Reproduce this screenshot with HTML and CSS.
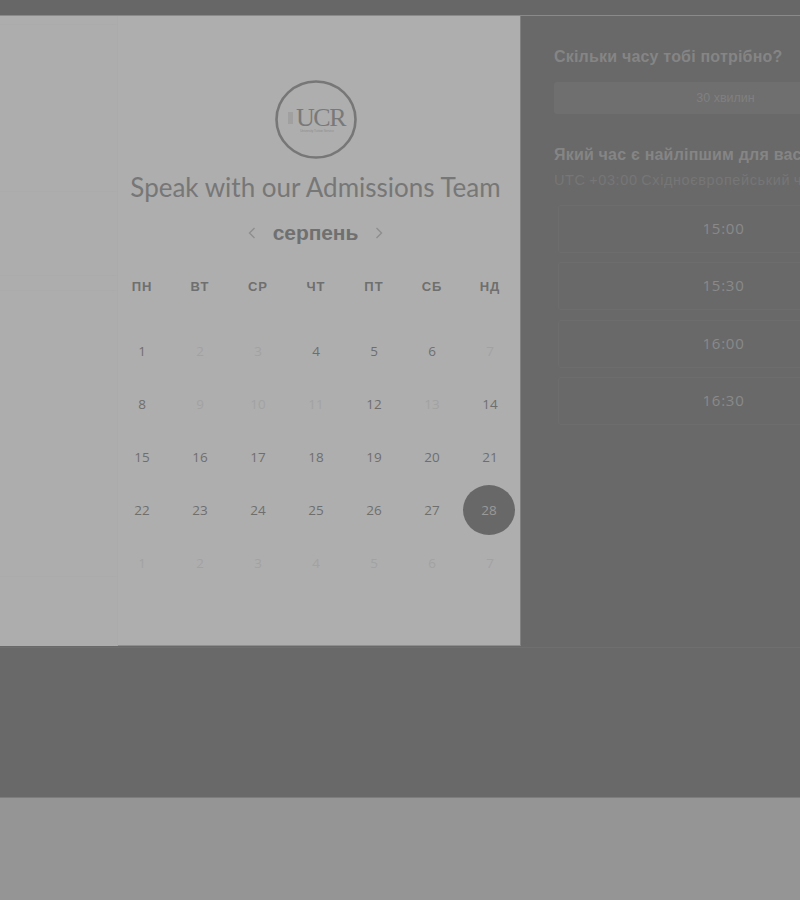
FILE: index.html
```html
<!DOCTYPE html>
<html lang="uk">

<head>
  <meta charset="UTF-8">
  <title>Speak with our Admissions Team</title>
  <link rel="stylesheet" href="styles.css">
</head>

<body>
  <div class="topbar"></div>
  <main class="booking">
    <aside class="side">
      <div class="side-box side-a"></div>
      <div class="side-box side-b"></div>
      <div class="side-box side-c"></div>
      <div class="side-box side-d"></div>
      <div class="side-box side-e"></div>
    </aside>
    <section class="calendar">
      <svg class="logo" width="82" height="79" viewBox="0 0 82 79">
        <ellipse cx="41" cy="39.5" rx="39.5" ry="38" fill="none" stroke="#777777" stroke-width="2.6" />
        <rect x="13" y="32" width="5" height="12" fill="#a0a0a0" />
        <text class="logo-name" x="45.5" y="46" text-anchor="middle">UCR</text>
        <text class="logo-sub" x="42" y="52" text-anchor="middle">University Tuition Service</text>
      </svg>
      <h1>Speak with our Admissions Team</h1>
      <div class="month">
        <svg width="10" height="14" viewBox="0 0 10 14"><path d="M7.5 2 2.5 7l5 5" fill="none" stroke="#8e8e8e" stroke-width="1.4" /></svg>
        <span class="month-name">серпень</span>
        <svg width="10" height="14" viewBox="0 0 10 14"><path d="M2.5 2l5 5-5 5" fill="none" stroke="#8e8e8e" stroke-width="1.4" /></svg>
      </div>
      <div class="weekdays">
        <span>ПН</span><span>ВТ</span><span>СР</span><span>ЧТ</span><span>ПТ</span><span>СБ</span><span>НД</span>
      </div>
      <div class="days">
        <span class="day">1</span><span class="day off">2</span><span class="day off">3</span><span class="day">4</span><span class="day">5</span><span class="day">6</span><span class="day off">7</span>
        <span class="day">8</span><span class="day off">9</span><span class="day off">10</span><span class="day off">11</span><span class="day">12</span><span class="day off">13</span><span class="day">14</span>
        <span class="day">15</span><span class="day">16</span><span class="day">17</span><span class="day">18</span><span class="day">19</span><span class="day">20</span><span class="day">21</span>
        <span class="day">22</span><span class="day">23</span><span class="day">24</span><span class="day">25</span><span class="day">26</span><span class="day">27</span><span class="day selected"><b>28</b></span>
        <span class="day off">1</span><span class="day off">2</span><span class="day off">3</span><span class="day off">4</span><span class="day off">5</span><span class="day off">6</span><span class="day off">7</span>
      </div>
    </section>
    <section class="times">
      <h2>Скільки часу тобі потрібно?</h2>
      <div class="duration">30 хвилин</div>
      <h2 class="best">Який час є найліпшим для вас?</h2>
      <p class="zone">UTC +03:00 Східноєвропейський час</p>
      <div class="slots">
        <div class="slot">15:00</div>
        <div class="slot">15:30</div>
        <div class="slot">16:00</div>
        <div class="slot">16:30</div>
      </div>
    </section>
  </main>
  <div class="band"></div>
  <footer class="footer"></footer>
</body>

</html>
```
FILE: styles.css
```css
html,
body {
  height: 100%;
}

body {
  margin: 0;
  display: flex;
  flex-direction: column;
  overflow: hidden;
  background: #959595;
  font-family: "Liberation Sans", sans-serif;
}

.topbar {
  height: 16px;
  flex: none;
  background: #676767;
  border-bottom: 1px solid #8a8a8a;
  box-sizing: border-box;
}

.booking {
  display: flex;
  align-items: flex-start;
  height: 632px;
  flex: none;
  background: #696969;
  border-bottom: 1px solid #6f6f6f;
  box-sizing: border-box;
}

.side {
  width: 118px;
  height: 630px;
  flex: none;
  display: flex;
  flex-direction: column;
  background: #adadad;
  border-right: 1px solid #ababab;
  box-sizing: border-box;
}

.side-box {
  border-bottom: 1px solid #ababab;
  box-sizing: border-box;
}

.side-a {
  height: 9px;
}

.side-b {
  height: 167px;
}

.side-c {
  height: 84px;
}

.side-d {
  height: 15px;
}

.side-e {
  height: 286px;
}

.calendar {
  width: 403px;
  height: 630px;
  flex: none;
  box-sizing: border-box;
  padding: 64px 7px 0 0;
  display: flex;
  flex-direction: column;
  align-items: center;
  background: #aeaeae;
  border-right: 1px solid #808080;
  border-bottom: 1px solid #8f8f8f;
}

.logo {
  display: block;
}

.logo-name {
  font-family: "Liberation Serif", serif;
  font-size: 26px;
  letter-spacing: -1.5px;
  fill: #797979;
}

.logo-sub {
  font-family: "Liberation Sans", sans-serif;
  font-size: 3px;
  fill: #8c8c8c;
}

h1 {
  margin: 13px 0 0;
  font-family: Lato, sans-serif;
  font-size: 26px;
  line-height: 30px;
  font-weight: 400;
  color: #777777;
  white-space: nowrap;
}

.month {
  display: flex;
  align-items: center;
  gap: 16px;
  margin-top: 16px;
  height: 30px;
}

.month-name {
  font-size: 21px;
  font-weight: 700;
  letter-spacing: -0.1px;
  color: #707070;
}

.weekdays,
.days {
  display: grid;
  grid-template-columns: repeat(7, 58px);
  width: 406px;
  align-self: flex-start;
  margin-left: -5px;
}

.weekdays {
  margin-top: 31px;
  font-size: 13px;
  line-height: 16px;
  font-weight: 700;
  letter-spacing: 1px;
  text-align: center;
  color: #6f6f6f;
}

.days {
  margin-top: 29px;
  grid-auto-rows: 53px;
}

.day {
  display: flex;
  align-items: center;
  justify-content: center;
  font-family: "Open Sans", sans-serif;
  font-size: 13.5px;
  font-weight: 500;
  color: #6e6e6e;
}

.day.off {
  font-weight: 400;
  color: #a2a2a2;
}

.day.selected b {
  width: 52px;
  height: 50px;
  margin-right: 2px;
  border-radius: 50%;
  display: flex;
  align-items: center;
  justify-content: center;
  font-weight: 400;
  background: #686868;
  color: #999999;
}

.times {
  flex: 1;
  min-width: 0;
  padding: 31px 0 0 33px;
  white-space: nowrap;
}

h2 {
  margin: 0;
  font-size: 16px;
  line-height: 20px;
  font-weight: 700;
  letter-spacing: 0.2px;
  color: #858585;
}

.duration {
  width: 343px;
  height: 32px;
  margin-top: 15px;
  line-height: 32px;
  text-align: center;
  font-size: 12.5px;
  color: #808080;
  background: #6f6f6f;
  border-radius: 3px;
}

.best {
  margin-top: 31px;
}

.zone {
  margin: 6px 0 0;
  font-size: 14.5px;
  line-height: 18px;
  letter-spacing: 0.6px;
  word-spacing: -1px;
  color: #767676;
}

.slots {
  display: flex;
  flex-direction: column;
  gap: 9.33px;
  width: 331px;
  margin: 16px 0 0 4px;
}

.slot {
  height: 48px;
  line-height: 45px;
  box-sizing: border-box;
  text-align: center;
  font-family: "Open Sans", sans-serif;
  font-size: 15px;
  letter-spacing: 0.8px;
  color: #8a8a8a;
  border: 1px solid #6d6d6d;
  border-radius: 3px;
}

.band {
  height: 150px;
  flex: none;
  background: #696969;
  border-bottom: 1px solid #7d7d7d;
  box-sizing: border-box;
}

.footer {
  flex: 1;
  background: #959595;
}
```
